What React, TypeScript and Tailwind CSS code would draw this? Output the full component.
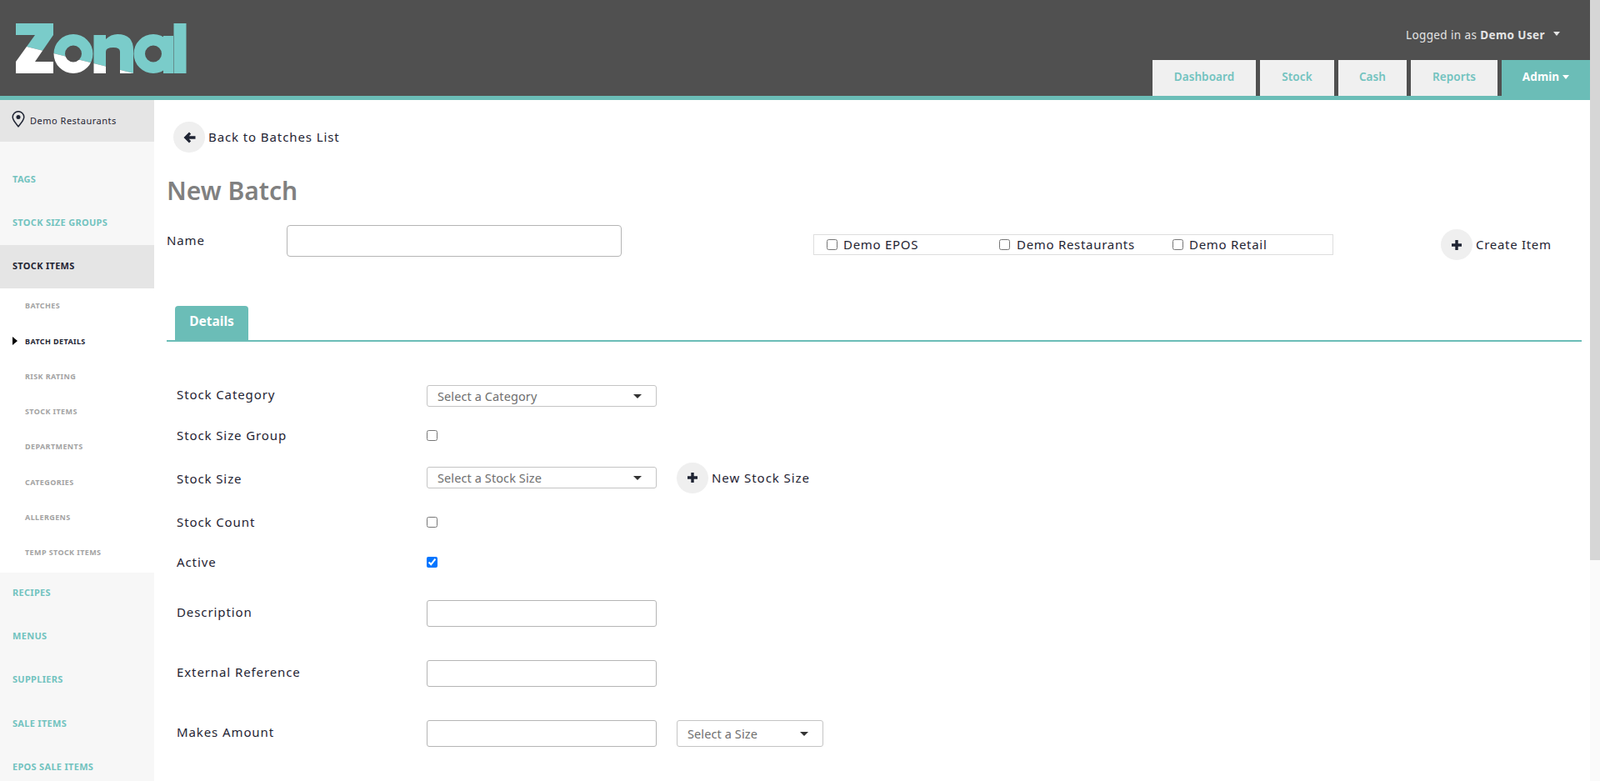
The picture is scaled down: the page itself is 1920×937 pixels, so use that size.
import React from "react";

const body = "font-['Noto_Sans',sans-serif]";

function Logo() {
  const shapes = (
    <>
      <polygon points="19,28 64,28 64,42 42,74 64,74 64,88 19,88 19,74 42,42 19,42" />
      <path fillRule="evenodd" d="M64.5 64.5a23.5 23.5 0 1 0 47 0a23.5 23.5 0 1 0 -47 0zM78 64.5a10 10 0 1 1 20 0a10 10 0 1 1 -20 0z" />
      <path d="M112.500 88V42H127V47Q133 41 141 41Q160 41 160 60V88H144V62Q144 57 136 57Q127 57 127 62V88Z" />
      <path fillRule="evenodd" d="M160.500 64.500a23.500 23.500 0 1 0 47 0a23.500 23.500 0 1 0 -47 0zM174 64.500a10 10 0 1 1 20 0a10 10 0 1 1 -20 0z" />
      <rect x="196" y="43" width="12" height="45" />
      <rect x="208.500" y="28" width="15" height="60" />
    </>
  );
  return (
    <svg width="240" height="115" viewBox="0 0 240 115" className="block shrink-0">
      <defs>
        <clipPath id="logo-top"><polygon points="0,47.900 240,107.700 240,0 0,0" /></clipPath>
        <clipPath id="logo-bottom"><polygon points="0,47.900 240,107.700 240,115 0,115" /></clipPath>
      </defs>
      <g fill="#7accca" clipPath="url(#logo-top)">{shapes}</g>
      <g fill="#ffffff" clipPath="url(#logo-bottom)">{shapes}</g>
    </svg>
  );
}

function Caret({ className = "" }: { className?: string }) {
  return <span className={`inline-block w-0 h-0 border-x-[4px] border-x-transparent border-t-[5px] ${className}`} />;
}

function RoundIcon({ kind }: { kind: "plus" | "back" }) {
  return (
    <span className="w-[38px] h-[37px] rounded-full bg-[#efefef] flex items-center justify-center shrink-0">
      {kind === "plus" ? (
        <svg width="14" height="14" viewBox="0 0 14 14"><path d="M5.300 1h3.400v4.300H13v3.400H8.700V13H5.300V8.700H1V5.300h4.300z" fill="#1f2433" /></svg>
      ) : (
        <svg width="15" height="14" viewBox="0 0 15 14"><path d="M7 0.500 9.200 2.700 6.800 5.300H14.500V8.700H6.800L9.200 11.300 7 13.500 0.500 7z" fill="#1f2433" /></svg>
      )}
    </span>
  );
}

function Box({ checked = false, className = "" }: { checked?: boolean; className?: string }) {
  return <input type="checkbox" defaultChecked={checked} className={`block w-[13px] h-[13px] m-0 shrink-0 [accent-color:#0075ff] ${className}`} />;
}

function TopNav({ label, dark = false }: { label: string; dark?: boolean }) {
  return (
    <div className={`h-[52.300px] shrink-0 flex items-center pl-[15px] text-[11px] font-bold tracking-[0.3px] font-['Lato',sans-serif] ${dark ? "bg-[#e5e5e5] text-[#1f2433]" : "text-[#72c3bf]"}`}>
      {label}
    </div>
  );
}

function SubNav({ label, active = false }: { label: string; active?: boolean }) {
  return (
    <div className={`h-[42.300px] shrink-0 flex items-center pl-[30px] relative text-[9px] font-bold tracking-[0.4px] font-['Lato',sans-serif] ${active ? "text-[#1f2433]" : "text-[#a3a3a3]"}`}>
      {active && <span className="absolute left-[15px] w-0 h-0 border-y-[5px] border-y-transparent border-l-[6px] border-l-black" />}
      {label}
    </div>
  );
}

function MainTab({ label, width }: { label: string; width: string }) {
  return (
    <div className={`${width} h-[43px] bg-[#f0f0f0] text-[#72c3bf] font-semibold text-[13.500px] tracking-[0.1px] flex items-center justify-center pb-[3px]`}>
      {label}
    </div>
  );
}

function Select({ label, width }: { label: string; width: string }) {
  return (
    <div className={`${width} h-full border border-[#c4c4c4] rounded-[3px] flex items-center justify-between pl-[12px] pr-[17px] text-[14.500px] tracking-[0.1px] text-[#6f6f6f]`}>
      <span className="pt-[1px]">{label}</span>
      <Caret className="border-t-[#333333] border-x-[5px]" />
    </div>
  );
}

function Field({ label, rowClass, labelClass, children }: { label: string; rowClass: string; labelClass: string; children?: React.ReactNode }) {
  return (
    <div className={`flex items-center ${rowClass}`}>
      <div className={`w-[312px] pl-[12px] text-[15px] tracking-[0.9px] text-[#1f2433] shrink-0 ${labelClass}`}>{label}</div>
      {children}
    </div>
  );
}

const TextInput = () => <input className="block w-[276px] h-[32px] border border-[#b5b5b5] rounded-[3px] bg-white" />;

export default function App() {
  return (
    <div className={`${body} flex h-[937px] overflow-hidden bg-white`}>
      <div className="w-[1908px] shrink-0 flex flex-col">
        <header className="h-[120px] shrink-0 bg-[#505050] border-b-[5px] border-[#6bbdb7] flex justify-between">
          <Logo />
          <div className="flex flex-col items-end">
            <div className="h-[72px] shrink-0 flex items-start pt-[32px] pr-[36px] text-[#e4e4e4] text-[13.500px] tracking-[0.4px]">
              <span>Logged in as <b className="font-bold">Demo User</b></span>
              <Caret className="border-t-[#e4e4e4] ml-[10px] mt-[6px]" />
            </div>
            <div className="flex gap-[5px] items-start h-[43px] shrink-0">
              <MainTab label="Dashboard" width="w-[124px]" />
              <MainTab label="Stock" width="w-[89px]" />
              <MainTab label="Cash" width="w-[82px]" />
              <MainTab label="Reports" width="w-[104px]" />
              <div className="w-[106px] h-[48px] shrink-0 bg-[#6bbdb7] text-white font-bold text-[13.500px] tracking-[0.1px] flex items-center justify-center gap-[4px] pb-[8px]">
                Admin <Caret className="border-t-white" />
              </div>
            </div>
          </div>
        </header>
        <div className="flex flex-1 min-h-0">
          <aside className="w-[185px] shrink-0 flex flex-col overflow-hidden">
            <div className="h-[50px] shrink-0 bg-[#e5e5e5] flex items-center pl-[14px] gap-[6px] text-[11px] tracking-[0.5px] text-[#1f2433] font-['Lato',sans-serif]">
              <svg width="16" height="20" viewBox="0 0 16 20" fill="none" className="-mt-[4px] shrink-0">
                <path d="M8 18.800C5 15 1.200 11.200 1.200 7.500a6.800 6.800 0 0 1 13.600 0C14.800 11.200 11 15 8 18.800Z" stroke="#1f2433" strokeWidth="1.500" />
                <circle cx="8" cy="7.500" r="2.500" fill="#1f2433" />
              </svg>
              Demo Restaurants
            </div>
            <div className="bg-[#f7f7f7] pt-[19px] shrink-0">
              <TopNav label="TAGS" />
              <TopNav label="STOCK SIZE GROUPS" />
              <TopNav label="STOCK ITEMS" dark />
            </div>
            <div className="h-[341px] shrink-0">
              <SubNav label="BATCHES" />
              <SubNav label="BATCH DETAILS" active />
              <SubNav label="RISK RATING" />
              <SubNav label="STOCK ITEMS" />
              <SubNav label="DEPARTMENTS" />
              <SubNav label="CATEGORIES" />
              <SubNav label="ALLERGENS" />
              <SubNav label="TEMP STOCK ITEMS" />
            </div>
            <div className="bg-[#f7f7f7] flex-1">
              <div className="-mt-[2px]">
                <TopNav label="RECIPES" />
                <TopNav label="MENUS" />
                <TopNav label="SUPPLIERS" />
                <TopNav label="SALE ITEMS" />
                <TopNav label="EPOS SALE ITEMS" />
              </div>
            </div>
          </aside>
          <main className="flex-1 min-w-0 pl-[15px] pr-[10px] text-[#1f2433]">
            <div className="flex items-center gap-[4px] ml-[8px] mt-[26px] h-[37px] text-[15px] tracking-[0.9px]">
              <RoundIcon kind="back" />
              <span>Back to Batches List</span>
            </div>
            <h1 className="mt-[24px] h-[44px] leading-[44px] text-[30px] font-semibold text-[#808080]">New Batch</h1>
            <div className="flex items-start mt-[19px] h-[97px]">
              <div className="w-[144px] pt-[9px] text-[15px] tracking-[0.9px] shrink-0 leading-[18px]">Name</div>
              <input className="block w-[402px] h-[38px] border border-[#b5b5b5] rounded-[4px] bg-white shrink-0" />
              <div className="ml-[230px] mt-[11px] w-[624px] h-[25px] border border-[#dedede] flex items-center pl-[15px] shrink-0 text-[15px] tracking-[0.7px]">
                <label className="w-[207px] flex items-center gap-[7px]"><Box /> Demo EPOS</label>
                <label className="w-[208px] flex items-center gap-[8px]"><Box /> Demo Restaurants</label>
                <label className="flex items-center gap-[7px]"><Box /> Demo Retail</label>
              </div>
              <div className="ml-[129px] mt-[5px] flex items-center gap-[4px] text-[15px] tracking-[0.7px] shrink-0">
                <RoundIcon kind="plus" />
                <span>Create Item</span>
              </div>
            </div>
            <div className="border-b-[2px] border-[#6bbdb7] h-[43px] pl-[10px]">
              <div className="w-[88px] h-[41px] rounded-t-[4px] bg-[#6bbdb7] text-white font-bold text-[15.500px] flex items-center justify-center pb-[3px]">Details</div>
            </div>
            <div className="flex flex-col mt-[52px]">
              <Field label="Stock Category" rowClass="h-[26px]" labelClass="pb-[3px]">
                <Select label="Select a Category" width="w-[276px]" />
              </Field>
              <Field label="Stock Size Group" rowClass="h-[26px] mt-[22px]" labelClass="pb-[1px]"><Box className="-mt-[2px]" /></Field>
              <Field label="Stock Size" rowClass="h-[26px] mt-[24px]" labelClass="pt-[3px]">
                <Select label="Select a Stock Size" width="w-[276px]" />
                <div className="ml-[24px] flex items-center gap-[4px] text-[15px] tracking-[0.95px]">
                  <RoundIcon kind="plus" />
                  <span>New Stock Size</span>
                </div>
              </Field>
              <Field label="Stock Count" rowClass="h-[26px] mt-[28px]" labelClass="pb-[1px]"><Box className="-mt-[2px]" /></Field>
              <Field label="Active" rowClass="h-[26px] mt-[22px]" labelClass="pb-[1px]"><Box checked className="-mt-[2px]" /></Field>
              <Field label="Description" rowClass="h-[32px] mt-[32px]" labelClass="pb-[4px]"><TextInput /></Field>
              <Field label="External Reference" rowClass="h-[32px] mt-[40px]" labelClass="pb-[4px]"><TextInput /></Field>
              <Field label="Makes Amount" rowClass="h-[32px] mt-[40px]" labelClass="pb-[4px]">
                <TextInput />
                <div className="ml-[24px] h-full"><Select label="Select a Size" width="w-[176px]" /></div>
              </Field>
            </div>
          </main>
        </div>
      </div>
      <div className="w-[12px] bg-[#fafafa] flex flex-col shrink-0">
        <div className="h-[672px] bg-[#d6d6d6]" />
      </div>
    </div>
  );
}
